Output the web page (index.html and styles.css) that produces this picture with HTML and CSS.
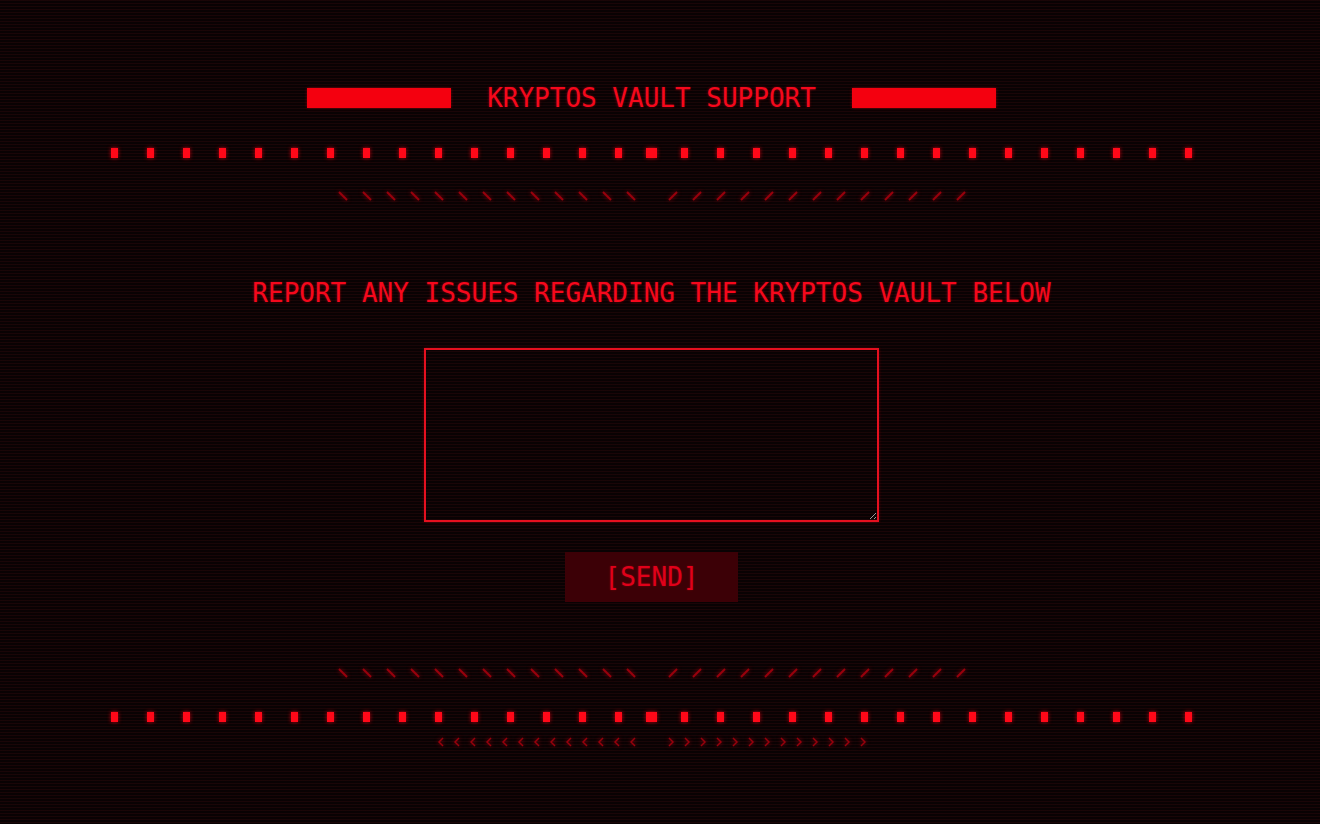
FILE: index.html
```html
<!DOCTYPE html>
<html lang="en">
<head>
<meta charset="utf-8">
<title>Kryptos Vault Support</title>
<link rel="stylesheet" href="styles.css">
</head>
<body>
<main class="page">
  <header class="title-row">
    <div class="bar"></div>
    <h1 class="title">KRYPTOS VAULT SUPPORT</h1>
    <div class="bar"></div>
  </header>

  <div class="dots dots-top">
    <div class="dot-group">
      <i class="dot"></i><i class="dot"></i><i class="dot"></i><i class="dot"></i><i class="dot"></i>
      <i class="dot"></i><i class="dot"></i><i class="dot"></i><i class="dot"></i><i class="dot"></i>
      <i class="dot"></i><i class="dot"></i><i class="dot"></i><i class="dot"></i><i class="dot"></i>
    </div>
    <i class="dot dot-big"></i>
    <div class="dot-group">
      <i class="dot"></i><i class="dot"></i><i class="dot"></i><i class="dot"></i><i class="dot"></i>
      <i class="dot"></i><i class="dot"></i><i class="dot"></i><i class="dot"></i><i class="dot"></i>
      <i class="dot"></i><i class="dot"></i><i class="dot"></i><i class="dot"></i><i class="dot"></i>
    </div>
  </div>

  <div class="slashes slashes-top">
    <div class="slash-group">
      <svg class="sl" viewBox="0 0 10 10"><line x1="1" y1="1" x2="9" y2="9"/></svg>
      <svg class="sl" viewBox="0 0 10 10"><line x1="1" y1="1" x2="9" y2="9"/></svg>
      <svg class="sl" viewBox="0 0 10 10"><line x1="1" y1="1" x2="9" y2="9"/></svg>
      <svg class="sl" viewBox="0 0 10 10"><line x1="1" y1="1" x2="9" y2="9"/></svg>
      <svg class="sl" viewBox="0 0 10 10"><line x1="1" y1="1" x2="9" y2="9"/></svg>
      <svg class="sl" viewBox="0 0 10 10"><line x1="1" y1="1" x2="9" y2="9"/></svg>
      <svg class="sl" viewBox="0 0 10 10"><line x1="1" y1="1" x2="9" y2="9"/></svg>
      <svg class="sl" viewBox="0 0 10 10"><line x1="1" y1="1" x2="9" y2="9"/></svg>
      <svg class="sl" viewBox="0 0 10 10"><line x1="1" y1="1" x2="9" y2="9"/></svg>
      <svg class="sl" viewBox="0 0 10 10"><line x1="1" y1="1" x2="9" y2="9"/></svg>
      <svg class="sl" viewBox="0 0 10 10"><line x1="1" y1="1" x2="9" y2="9"/></svg>
      <svg class="sl" viewBox="0 0 10 10"><line x1="1" y1="1" x2="9" y2="9"/></svg>
      <svg class="sl" viewBox="0 0 10 10"><line x1="1" y1="1" x2="9" y2="9"/></svg>
    </div>
    <div class="slash-group">
      <svg class="sl" viewBox="0 0 10 10"><line x1="1" y1="9" x2="9" y2="1"/></svg>
      <svg class="sl" viewBox="0 0 10 10"><line x1="1" y1="9" x2="9" y2="1"/></svg>
      <svg class="sl" viewBox="0 0 10 10"><line x1="1" y1="9" x2="9" y2="1"/></svg>
      <svg class="sl" viewBox="0 0 10 10"><line x1="1" y1="9" x2="9" y2="1"/></svg>
      <svg class="sl" viewBox="0 0 10 10"><line x1="1" y1="9" x2="9" y2="1"/></svg>
      <svg class="sl" viewBox="0 0 10 10"><line x1="1" y1="9" x2="9" y2="1"/></svg>
      <svg class="sl" viewBox="0 0 10 10"><line x1="1" y1="9" x2="9" y2="1"/></svg>
      <svg class="sl" viewBox="0 0 10 10"><line x1="1" y1="9" x2="9" y2="1"/></svg>
      <svg class="sl" viewBox="0 0 10 10"><line x1="1" y1="9" x2="9" y2="1"/></svg>
      <svg class="sl" viewBox="0 0 10 10"><line x1="1" y1="9" x2="9" y2="1"/></svg>
      <svg class="sl" viewBox="0 0 10 10"><line x1="1" y1="9" x2="9" y2="1"/></svg>
      <svg class="sl" viewBox="0 0 10 10"><line x1="1" y1="9" x2="9" y2="1"/></svg>
      <svg class="sl" viewBox="0 0 10 10"><line x1="1" y1="9" x2="9" y2="1"/></svg>
    </div>
  </div>

  <h2 class="heading">REPORT ANY ISSUES REGARDING THE KRYPTOS VAULT BELOW</h2>

  <form class="report-form">
    <textarea class="report-input" aria-label="Report"></textarea>
    <button type="button" class="send-btn">[SEND]</button>
  </form>

  <div class="slashes slashes-bottom">
    <div class="slash-group">
      <svg class="sl" viewBox="0 0 10 10"><line x1="1" y1="1" x2="9" y2="9"/></svg>
      <svg class="sl" viewBox="0 0 10 10"><line x1="1" y1="1" x2="9" y2="9"/></svg>
      <svg class="sl" viewBox="0 0 10 10"><line x1="1" y1="1" x2="9" y2="9"/></svg>
      <svg class="sl" viewBox="0 0 10 10"><line x1="1" y1="1" x2="9" y2="9"/></svg>
      <svg class="sl" viewBox="0 0 10 10"><line x1="1" y1="1" x2="9" y2="9"/></svg>
      <svg class="sl" viewBox="0 0 10 10"><line x1="1" y1="1" x2="9" y2="9"/></svg>
      <svg class="sl" viewBox="0 0 10 10"><line x1="1" y1="1" x2="9" y2="9"/></svg>
      <svg class="sl" viewBox="0 0 10 10"><line x1="1" y1="1" x2="9" y2="9"/></svg>
      <svg class="sl" viewBox="0 0 10 10"><line x1="1" y1="1" x2="9" y2="9"/></svg>
      <svg class="sl" viewBox="0 0 10 10"><line x1="1" y1="1" x2="9" y2="9"/></svg>
      <svg class="sl" viewBox="0 0 10 10"><line x1="1" y1="1" x2="9" y2="9"/></svg>
      <svg class="sl" viewBox="0 0 10 10"><line x1="1" y1="1" x2="9" y2="9"/></svg>
      <svg class="sl" viewBox="0 0 10 10"><line x1="1" y1="1" x2="9" y2="9"/></svg>
    </div>
    <div class="slash-group">
      <svg class="sl" viewBox="0 0 10 10"><line x1="1" y1="9" x2="9" y2="1"/></svg>
      <svg class="sl" viewBox="0 0 10 10"><line x1="1" y1="9" x2="9" y2="1"/></svg>
      <svg class="sl" viewBox="0 0 10 10"><line x1="1" y1="9" x2="9" y2="1"/></svg>
      <svg class="sl" viewBox="0 0 10 10"><line x1="1" y1="9" x2="9" y2="1"/></svg>
      <svg class="sl" viewBox="0 0 10 10"><line x1="1" y1="9" x2="9" y2="1"/></svg>
      <svg class="sl" viewBox="0 0 10 10"><line x1="1" y1="9" x2="9" y2="1"/></svg>
      <svg class="sl" viewBox="0 0 10 10"><line x1="1" y1="9" x2="9" y2="1"/></svg>
      <svg class="sl" viewBox="0 0 10 10"><line x1="1" y1="9" x2="9" y2="1"/></svg>
      <svg class="sl" viewBox="0 0 10 10"><line x1="1" y1="9" x2="9" y2="1"/></svg>
      <svg class="sl" viewBox="0 0 10 10"><line x1="1" y1="9" x2="9" y2="1"/></svg>
      <svg class="sl" viewBox="0 0 10 10"><line x1="1" y1="9" x2="9" y2="1"/></svg>
      <svg class="sl" viewBox="0 0 10 10"><line x1="1" y1="9" x2="9" y2="1"/></svg>
      <svg class="sl" viewBox="0 0 10 10"><line x1="1" y1="9" x2="9" y2="1"/></svg>
    </div>
  </div>

  <div class="dots dots-bottom">
    <div class="dot-group">
      <i class="dot"></i><i class="dot"></i><i class="dot"></i><i class="dot"></i><i class="dot"></i>
      <i class="dot"></i><i class="dot"></i><i class="dot"></i><i class="dot"></i><i class="dot"></i>
      <i class="dot"></i><i class="dot"></i><i class="dot"></i><i class="dot"></i><i class="dot"></i>
    </div>
    <i class="dot dot-big"></i>
    <div class="dot-group">
      <i class="dot"></i><i class="dot"></i><i class="dot"></i><i class="dot"></i><i class="dot"></i>
      <i class="dot"></i><i class="dot"></i><i class="dot"></i><i class="dot"></i><i class="dot"></i>
      <i class="dot"></i><i class="dot"></i><i class="dot"></i><i class="dot"></i><i class="dot"></i>
    </div>
  </div>

  <div class="chevrons">
    <div class="chev-group">
      <svg class="chev" viewBox="0 0 6 10"><polyline points="5,1 1,5 5,9"/></svg>
      <svg class="chev" viewBox="0 0 6 10"><polyline points="5,1 1,5 5,9"/></svg>
      <svg class="chev" viewBox="0 0 6 10"><polyline points="5,1 1,5 5,9"/></svg>
      <svg class="chev" viewBox="0 0 6 10"><polyline points="5,1 1,5 5,9"/></svg>
      <svg class="chev" viewBox="0 0 6 10"><polyline points="5,1 1,5 5,9"/></svg>
      <svg class="chev" viewBox="0 0 6 10"><polyline points="5,1 1,5 5,9"/></svg>
      <svg class="chev" viewBox="0 0 6 10"><polyline points="5,1 1,5 5,9"/></svg>
      <svg class="chev" viewBox="0 0 6 10"><polyline points="5,1 1,5 5,9"/></svg>
      <svg class="chev" viewBox="0 0 6 10"><polyline points="5,1 1,5 5,9"/></svg>
      <svg class="chev" viewBox="0 0 6 10"><polyline points="5,1 1,5 5,9"/></svg>
      <svg class="chev" viewBox="0 0 6 10"><polyline points="5,1 1,5 5,9"/></svg>
      <svg class="chev" viewBox="0 0 6 10"><polyline points="5,1 1,5 5,9"/></svg>
      <svg class="chev" viewBox="0 0 6 10"><polyline points="5,1 1,5 5,9"/></svg>
    </div>
    <div class="chev-group">
      <svg class="chev" viewBox="0 0 6 10"><polyline points="1,1 5,5 1,9"/></svg>
      <svg class="chev" viewBox="0 0 6 10"><polyline points="1,1 5,5 1,9"/></svg>
      <svg class="chev" viewBox="0 0 6 10"><polyline points="1,1 5,5 1,9"/></svg>
      <svg class="chev" viewBox="0 0 6 10"><polyline points="1,1 5,5 1,9"/></svg>
      <svg class="chev" viewBox="0 0 6 10"><polyline points="1,1 5,5 1,9"/></svg>
      <svg class="chev" viewBox="0 0 6 10"><polyline points="1,1 5,5 1,9"/></svg>
      <svg class="chev" viewBox="0 0 6 10"><polyline points="1,1 5,5 1,9"/></svg>
      <svg class="chev" viewBox="0 0 6 10"><polyline points="1,1 5,5 1,9"/></svg>
      <svg class="chev" viewBox="0 0 6 10"><polyline points="1,1 5,5 1,9"/></svg>
      <svg class="chev" viewBox="0 0 6 10"><polyline points="1,1 5,5 1,9"/></svg>
      <svg class="chev" viewBox="0 0 6 10"><polyline points="1,1 5,5 1,9"/></svg>
      <svg class="chev" viewBox="0 0 6 10"><polyline points="1,1 5,5 1,9"/></svg>
      <svg class="chev" viewBox="0 0 6 10"><polyline points="1,1 5,5 1,9"/></svg>
    </div>
  </div>
</main>
</body>
</html>
```

FILE: styles.css
```css
html, body {
  margin: 0;
  padding: 0;
  height: 100%;
}

body {
  background-color: #090203;
  background-image: repeating-linear-gradient(
    to bottom,
    rgba(40, 8, 10, 0.55) 0px,
    rgba(40, 8, 10, 0.55) 1px,
    transparent 1px,
    transparent 3px
  );
  font-family: "DejaVu Sans Mono", "Liberation Mono", monospace;
  color: #f5081c;
  overflow: hidden;
}

.page {
  box-sizing: border-box;
  width: 100%;
  padding: 82px 17px 0 0;
  display: flex;
  flex-direction: column;
  align-items: center;
}

.title-row {
  display: flex;
  align-items: center;
  gap: 36px;
  height: 32px;
}

.bar {
  width: 144px;
  height: 20px;
  background: #f4000f;
  box-shadow: 0 0 3px rgba(255, 0, 20, 0.4);
}

.title {
  margin: 0;
  font-size: 26px;
  line-height: 32px;
  font-weight: normal;
  color: #f5081c;
  text-shadow: 0 0 3px rgba(255, 0, 20, 0.4);
}

.dots {
  display: flex;
  align-items: center;
  height: 10px;
}

.dots-top { margin-top: 34px; }
.dots-bottom { margin-top: 33px; }

.dot-group {
  display: flex;
  gap: 29px;
}

.dot {
  display: block;
  width: 7px;
  height: 10px;
  background: #ff0818;
  box-shadow: 0 0 4px rgba(255, 0, 20, 0.7);
}

.dot-big {
  width: 11px;
  margin: 0 24px;
}

.slashes {
  display: flex;
  gap: 32px;
  height: 12px;
  align-items: center;
}

.slashes-top { margin-top: 32px; }
.slashes-bottom { margin-top: 65px; }

.slash-group {
  display: flex;
  gap: 14px;
}

.sl {
  display: block;
  width: 10px;
  height: 10px;
  filter: drop-shadow(0 0 2px rgba(255, 0, 20, 0.5));
}

.sl line {
  stroke: #98000c;
  stroke-width: 2;
  stroke-linecap: butt;
}

.heading {
  margin: 75px 0 0;
  font-size: 26px;
  line-height: 32px;
  font-weight: normal;
  color: #f5081c;
  text-shadow: 0 0 3px rgba(255, 0, 20, 0.4);
}

.report-form {
  margin: 39px 0 0;
  display: flex;
  flex-direction: column;
  align-items: center;
  gap: 30px;
}

.report-input {
  box-sizing: border-box;
  width: 455px;
  height: 174px;
  display: block;
  background: transparent;
  border: 2px solid #e5101f;
  border-radius: 0;
  outline: none;
  color: #f5081c;
  font-family: "DejaVu Sans Mono", monospace;
  font-size: 16px;
  padding: 4px;
  box-shadow: 0 0 3px rgba(255, 0, 20, 0.3);
}

.send-btn {
  width: 173px;
  height: 50px;
  border: none;
  border-radius: 0;
  background: #3c0006;
  color: #e0001a;
  font-family: "DejaVu Sans Mono", monospace;
  font-size: 26px;
  line-height: 50px;
  padding: 0;
  cursor: pointer;
  text-shadow: 0 0 2px rgba(255, 0, 20, 0.35);
}

.chevrons {
  margin-top: 15px;
  display: flex;
  gap: 32px;
  height: 10px;
  align-items: center;
}

.chev-group {
  display: flex;
  gap: 10px;
}

.chev {
  display: block;
  width: 6px;
  height: 10px;
  filter: drop-shadow(0 0 2px rgba(255, 0, 20, 0.5));
}

.chev polyline {
  fill: none;
  stroke: #98000c;
  stroke-width: 1.5;
}
```
